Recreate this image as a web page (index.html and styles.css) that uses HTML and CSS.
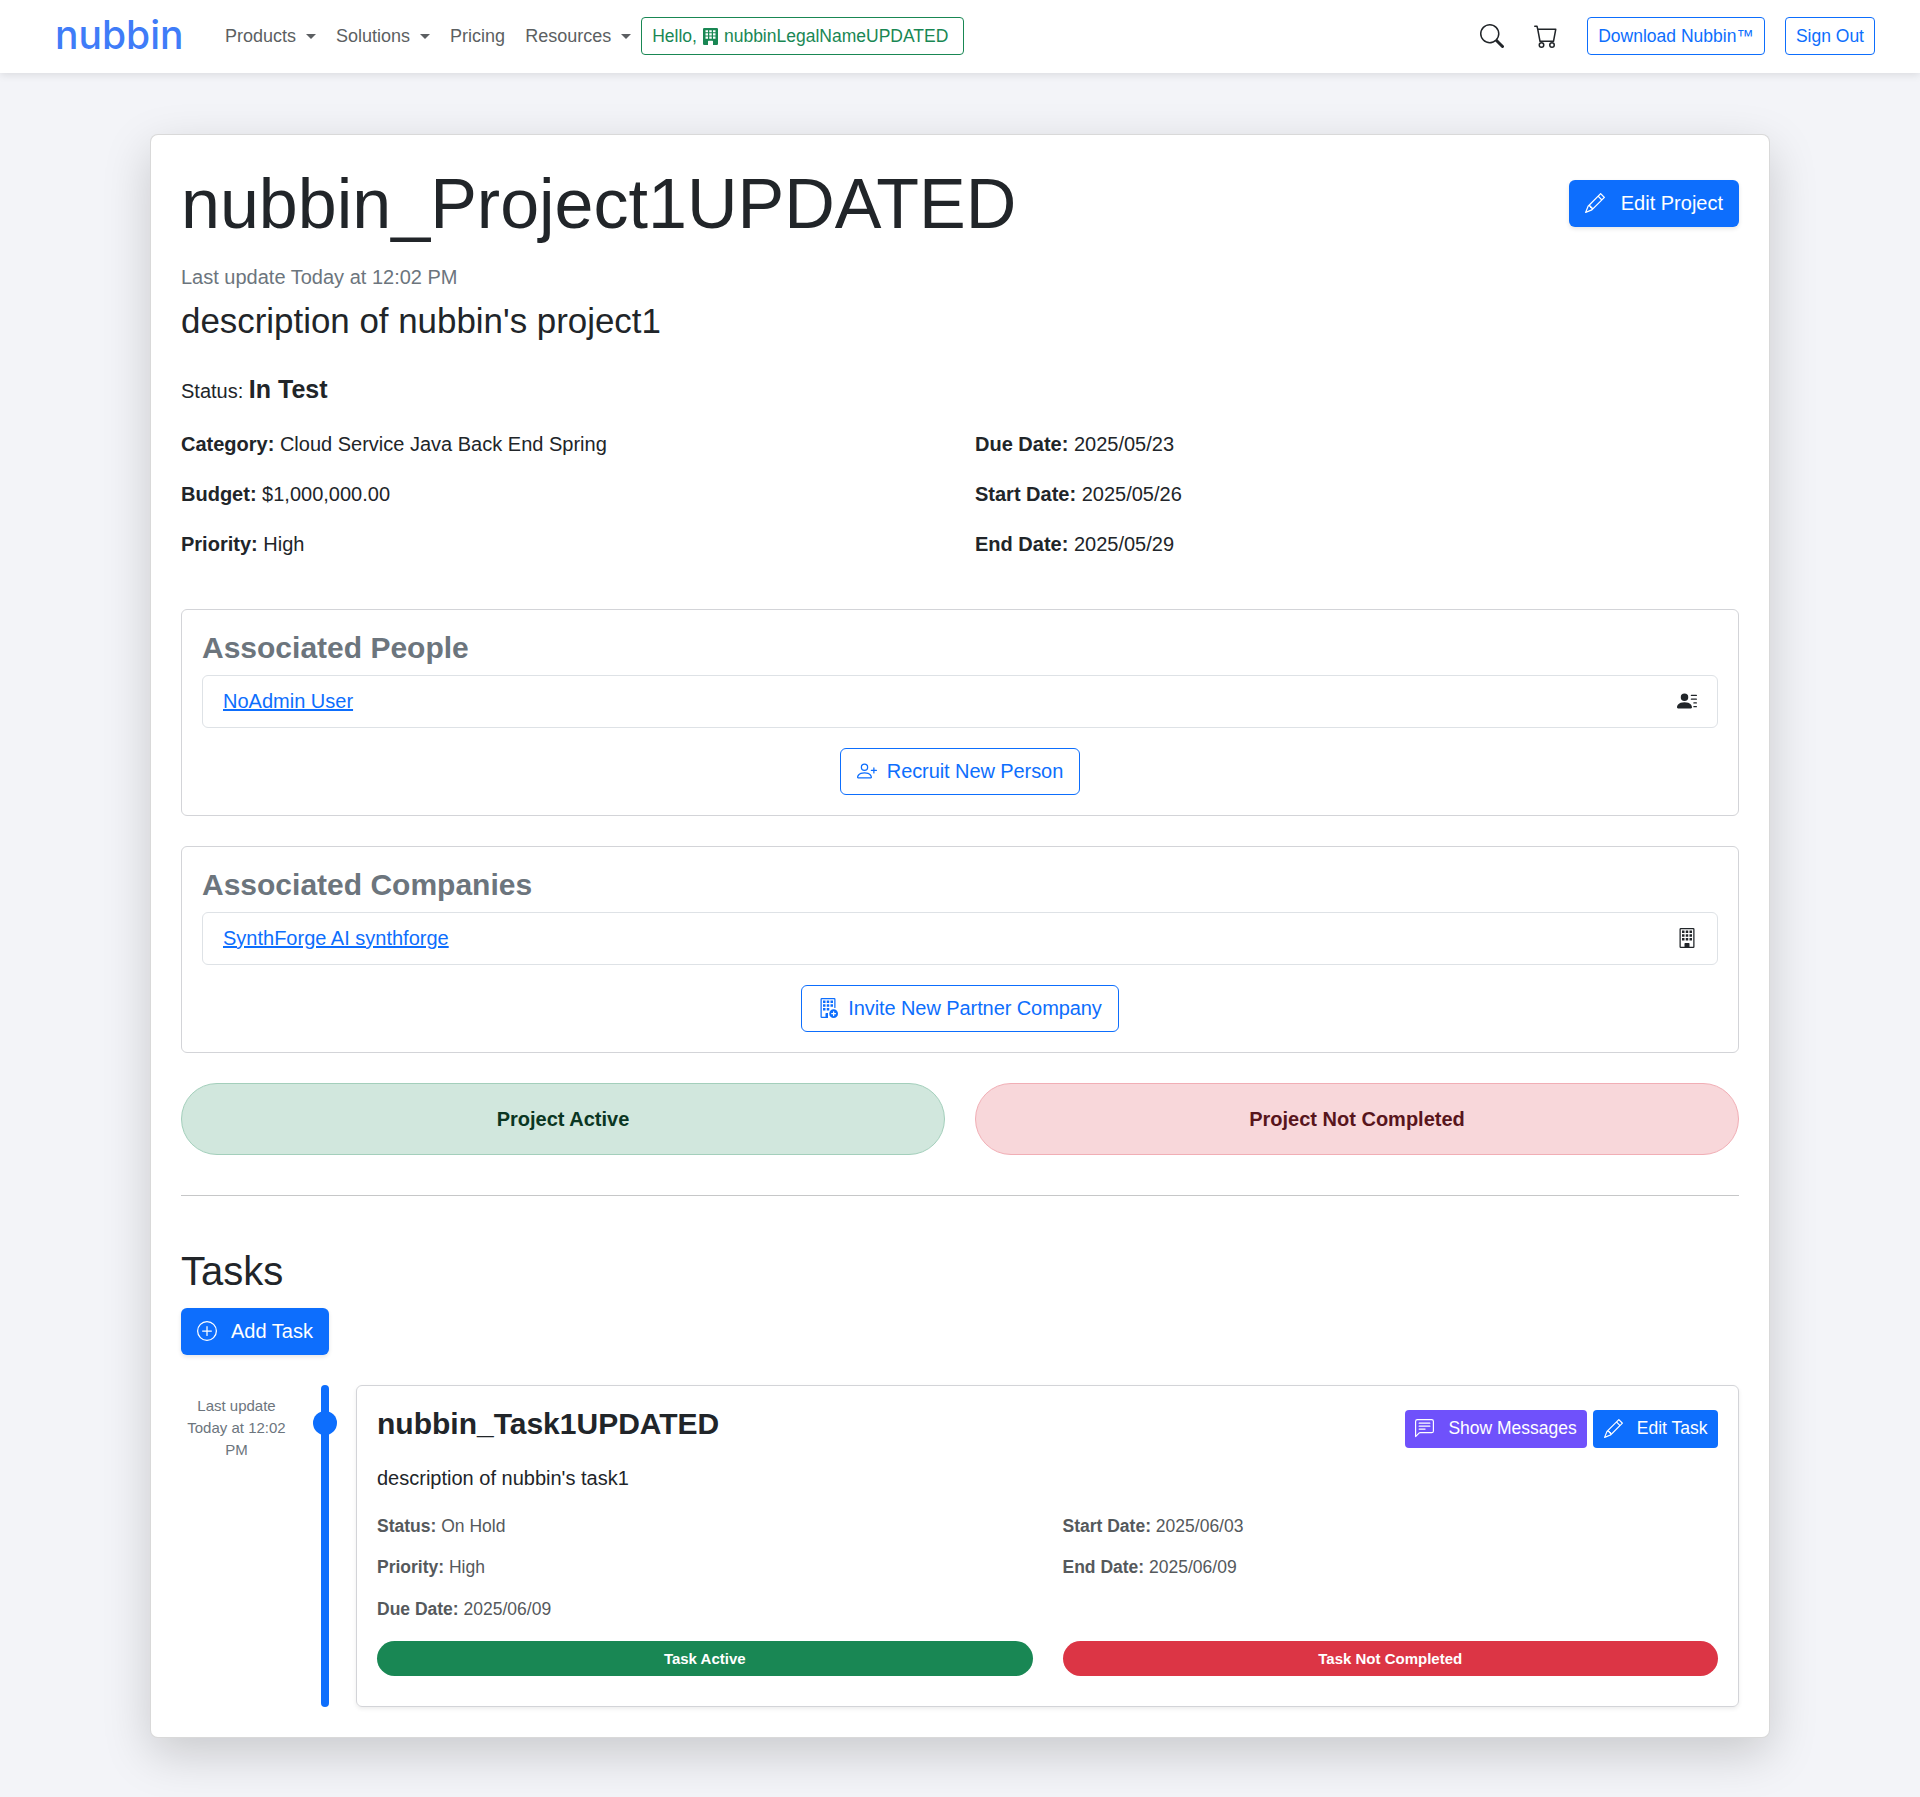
FILE: index.html

```html
<!DOCTYPE html>
<html lang="en">
<head>
  <meta charset="UTF-8" />
  <meta name="viewport" content="width=device-width, initial-scale=1.0" />
  <title>nubbin_Project1UPDATED</title>
  <link rel="stylesheet" href="styles.css">
</head>
<body>
  <nav class="navbar">
    <a class="logo" href="#">nubbin</a>
    <a class="nav-link caret" href="#">Products</a>
    <a class="nav-link caret" href="#">Solutions</a>
    <a class="nav-link" href="#">Pricing</a>
    <a class="nav-link caret" href="#">Resources</a>
    <a class="hello" href="#">Hello,
      <svg class="icon-hello" viewBox="2 0 12 16" preserveAspectRatio="none" fill="currentColor"><path fill-rule="evenodd" d="M3 0a1 1 0 0 0-1 1v14a1 1 0 0 0 1 1h3v-3.5a.5.5 0 0 1 .5-.5h3a.5.5 0 0 1 .5.5V16h3a1 1 0 0 0 1-1V1a1 1 0 0 0-1-1H3Zm1 2h2v2H4V2Zm3 0h2v2H7V2Zm3 0h2v2h-2V2ZM4 5h2v2H4V5Zm3 0h2v2H7V5Zm3 0h2v2h-2V5ZM4 8h2v2H4V8Zm3 0h2v2H7V8Zm3 0h2v2h-2V8Z"/></svg>
      nubbinLegalNameUPDATED</a>
    <div class="nav-right">
      <svg class="icon-search" viewBox="0 0 16 16" fill="currentColor"><path d="M11.742 10.344a6.5 6.5 0 1 0-1.397 1.398h-.001c.03.04.062.078.098.115l3.85 3.85a1 1 0 0 0 1.415-1.414l-3.85-3.85a1.007 1.007 0 0 0-.115-.1zM12 6.5a5.5 5.5 0 1 1-11 0 5.5 5.5 0 0 1 11 0z"/></svg>
      <svg class="icon-cart" viewBox="0 0 16 16" fill="currentColor"><path d="M0 1.5A.5.5 0 0 1 .5 1H2a.5.5 0 0 1 .485.379L2.89 3H14.5a.5.5 0 0 1 .491.592l-1.5 8A.5.5 0 0 1 13 12H4a.5.5 0 0 1-.491-.408L2.01 3.607 1.61 2H.5a.5.5 0 0 1-.5-.5zM3.102 4l1.313 7h8.17l1.313-7H3.102zM5 12a2 2 0 1 0 0 4 2 2 0 0 0 0-4zm7 0a2 2 0 1 0 0 4 2 2 0 0 0 0-4zm-7 1a1 1 0 1 1 0 2 1 1 0 0 1 0-2zm7 0a1 1 0 1 1 0 2 1 1 0 0 1 0-2z"/></svg>
      <a class="nav-btn download" href="#">Download Nubbin™</a>
      <a class="nav-btn" href="#">Sign Out</a>
    </div>
  </nav>

  <main class="project-card">
    <header class="project-head">
      <h1>nubbin_Project1UPDATED</h1>
      <a class="btn btn-primary" href="#">
        <svg class="icon-lg" viewBox="0 0 16 16" fill="currentColor"><path d="M12.146.146a.5.5 0 0 1 .708 0l3 3a.5.5 0 0 1 0 .708l-10 10a.5.5 0 0 1-.168.11l-5 2a.5.5 0 0 1-.65-.65l2-5a.5.5 0 0 1 .11-.168l10-10zM11.207 2.5 13.5 4.793 14.793 3.5 12.5 1.207 11.207 2.5zm1.586 3L10.5 3.207 4 9.707V10h.5a.5.5 0 0 1 .5.5v.5h.5a.5.5 0 0 1 .5.5v.5h.293l6.5-6.5zm-9.761 5.175-.106.106-1.528 3.821 3.821-1.528.106-.106A.5.5 0 0 1 5 12.5V12h-.5a.5.5 0 0 1-.5-.5V11h-.5a.5.5 0 0 1-.468-.325z"/></svg>
        Edit Project
      </a>
    </header>
    <p class="updated">Last update Today at 12:02 PM</p>
    <p class="description">description of nubbin's project1</p>
    <p class="status">Status: <strong>In Test</strong></p>

    <div class="details">
      <p><b>Category:</b> Cloud Service Java Back End Spring</p>
      <p><b>Due Date:</b> 2025/05/23</p>
      <p><b>Budget:</b> $1,000,000.00</p>
      <p><b>Start Date:</b> 2025/05/26</p>
      <p><b>Priority:</b> High</p>
      <p><b>End Date:</b> 2025/05/29</p>
    </div>

    <section class="assoc">
      <h2>Associated People</h2>
      <div class="assoc-item">
        <a href="#">NoAdmin User</a>
        <svg class="icon-item" viewBox="0 0 16 16" fill="currentColor"><path d="M6 8a3 3 0 1 0 0-6 3 3 0 0 0 0 6zm-5 6s-1 0-1-1 1-4 6-4 6 3 6 4-1 1-1 1H1zM11 3.5a.5.5 0 0 1 .5-.5h4a.5.5 0 0 1 0 1h-4a.5.5 0 0 1-.5-.5zm.5 2.5a.5.5 0 0 0 0 1h4a.5.5 0 0 0 0-1h-4zm2 3a.5.5 0 0 0 0 1h2a.5.5 0 0 0 0-1h-2zm0 3a.5.5 0 0 0 0 1h2a.5.5 0 0 0 0-1h-2z"/></svg>
      </div>
      <a class="btn btn-outline" href="#">
        <svg class="icon-lg" viewBox="0 0 16 16" fill="currentColor"><path d="M6 8a3 3 0 1 0 0-6 3 3 0 0 0 0 6zm2-3a2 2 0 1 1-4 0 2 2 0 0 1 4 0zm4 8c0 1-1 1-1 1H1s-1 0-1-1 1-4 6-4 6 3 6 4zm-1-.004c-.001-.246-.154-.986-.832-1.664C9.516 10.68 8.289 10 6 10c-2.29 0-3.516.68-4.168 1.332-.678.678-.83 1.418-.832 1.664h10z"/><path d="M13.5 5a.5.5 0 0 1 .5.5V7h1.5a.5.5 0 0 1 0 1H14v1.5a.5.5 0 0 1-1 0V8h-1.5a.5.5 0 0 1 0-1H13V5.5a.5.5 0 0 1 .5-.5z"/></svg>
        Recruit New Person
      </a>
    </section>

    <section class="assoc">
      <h2>Associated Companies</h2>
      <div class="assoc-item">
        <a href="#">SynthForge AI synthforge</a>
        <svg class="icon-item" viewBox="0 0 16 16" fill="currentColor"><path d="M2 1a1 1 0 0 1 1-1h10a1 1 0 0 1 1 1v14a1 1 0 0 1-1 1H3a1 1 0 0 1-1-1V1Zm11 0H3v14h3v-2.5a.5.5 0 0 1 .5-.5h3a.5.5 0 0 1 .5.5V15h3V1Z"/><path d="M4 2h2v2H4V2Zm3 0h2v2H7V2Zm3 0h2v2h-2V2ZM4 5h2v2H4V5Zm3 0h2v2H7V5Zm3 0h2v2h-2V5ZM4 8h2v2H4V8Zm3 0h2v2H7V8Zm3 0h2v2h-2V8Z"/></svg>
      </div>
      <a class="btn btn-outline" href="#">
        <svg class="icon-lg" viewBox="0 0 16 16" fill="currentColor"><path d="M12.5 16a3.5 3.5 0 1 0 0-7 3.5 3.5 0 0 0 0 7Zm.5-5v1h1a.5.5 0 0 1 0 1h-1v1a.5.5 0 0 1-1 0v-1h-1a.5.5 0 0 1 0-1h1v-1a.5.5 0 0 1 1 0Z"/><path d="M2 1a1 1 0 0 1 1-1h10a1 1 0 0 1 1 1v6.5a.5.5 0 0 1-1 0V1H3v14h3v-2.5a.5.5 0 0 1 .5-.5H8v4H3a1 1 0 0 1-1-1V1Z"/><path d="M4 2h2v2H4V2Zm3 0h2v2H7V2Zm3 0h2v2h-2V2ZM4 5h2v2H4V5Zm3 0h2v2H7V5Zm3 0h2v2h-2V5ZM4 8h2v2H4V8Zm3 0h2v2H7V8Z"/></svg>
        Invite New Partner Company
      </a>
    </section>

    <div class="state-row">
      <div class="state state-green">Project Active</div>
      <div class="state state-red">Project Not Completed</div>
    </div>

    <hr>

    <h2 class="tasks-title">Tasks</h2>
    <a class="btn btn-primary add-task" href="#">
      <svg class="icon-lg" viewBox="0 0 16 16" fill="currentColor"><path d="M8 15A7 7 0 1 1 8 1a7 7 0 0 1 0 14zm0 1A8 8 0 1 0 8 0a8 8 0 0 0 0 16z"/><path d="M8 4a.5.5 0 0 1 .5.5v3h3a.5.5 0 0 1 0 1h-3v3a.5.5 0 0 1-1 0v-3h-3a.5.5 0 0 1 0-1h3v-3A.5.5 0 0 1 8 4z"/></svg>
      Add Task
    </a>

    <div class="timeline">
      <div class="timeline-date">Last update<br>Today at 12:02 PM</div>
      <div class="timeline-line"><span class="timeline-dot"></span></div>
      <article class="task-card">
        <div class="task-head">
          <h3>nubbin_Task1UPDATED</h3>
          <div class="task-actions">
            <a class="btn-sm btn-purple" href="#">
              <svg class="icon-sm" viewBox="0 0 16 16" fill="currentColor"><path d="M14 1a1 1 0 0 1 1 1v8a1 1 0 0 1-1 1H4.414A2 2 0 0 0 3 11.586l-2 2V2a1 1 0 0 1 1-1h12zM2 0a2 2 0 0 0-2 2v12.793a.5.5 0 0 0 .854.353l2.853-2.853A1 1 0 0 1 4.414 12H14a2 2 0 0 0 2-2V2a2 2 0 0 0-2-2H2z"/><path d="M3 3.5a.5.5 0 0 1 .5-.5h9a.5.5 0 0 1 0 1h-9a.5.5 0 0 1-.5-.5zM3 6a.5.5 0 0 1 .5-.5h9a.5.5 0 0 1 0 1h-9A.5.5 0 0 1 3 6zm0 2.5a.5.5 0 0 1 .5-.5h5a.5.5 0 0 1 0 1h-5a.5.5 0 0 1-.5-.5z"/></svg>
              Show Messages
            </a>
            <a class="btn-sm btn-blue" href="#">
              <svg class="icon-sm" viewBox="0 0 16 16" fill="currentColor"><path d="M12.146.146a.5.5 0 0 1 .708 0l3 3a.5.5 0 0 1 0 .708l-10 10a.5.5 0 0 1-.168.11l-5 2a.5.5 0 0 1-.65-.65l2-5a.5.5 0 0 1 .11-.168l10-10zM11.207 2.5 13.5 4.793 14.793 3.5 12.5 1.207 11.207 2.5zm1.586 3L10.5 3.207 4 9.707V10h.5a.5.5 0 0 1 .5.5v.5h.5a.5.5 0 0 1 .5.5v.5h.293l6.5-6.5zm-9.761 5.175-.106.106-1.528 3.821 3.821-1.528.106-.106A.5.5 0 0 1 5 12.5V12h-.5a.5.5 0 0 1-.5-.5V11h-.5a.5.5 0 0 1-.468-.325z"/></svg>
              Edit Task
            </a>
          </div>
        </div>
        <p class="task-desc">description of nubbin's task1</p>
        <div class="task-details">
          <p><b>Status:</b> On Hold</p>
          <p><b>Start Date:</b> 2025/06/03</p>
          <p><b>Priority:</b> High</p>
          <p><b>End Date:</b> 2025/06/09</p>
          <p><b>Due Date:</b> 2025/06/09</p>
        </div>
        <div class="task-badges">
          <span class="badge badge-green">Task Active</span>
          <span class="badge badge-red">Task Not Completed</span>
        </div>
      </article>
    </div>
  </main>
</body>
</html>
```

FILE: styles.css

```css
:root {
  --blue: #0d6efd;
  --text: #212529;
  --muted: #6c757d;
  --line: #dee2e6;
}

* {
  box-sizing: border-box;
}

body {
  margin: 0;
  min-height: 1797px;
  background-color: #f3f4f8;
  color: var(--text);
  font-family: "Liberation Sans", Arial, sans-serif;
  font-size: 20px;
  line-height: 1.5;
}

a {
  text-decoration: none;
}

p {
  margin: 0;
}

/* navbar */
.navbar {
  display: flex;
  align-items: center;
  height: 73px;
  padding: 0 45px 1px 55px;
  background-color: #fff;
  box-shadow: 0 2px 8px rgba(0, 0, 0, 0.1);
  font-size: 18px;
}

.logo {
  width: 170px;
  margin-top: -3px;
  color: #3f7cf8;
  font-family: Inter, sans-serif;
  font-size: 39px;
  font-weight: 500;
  line-height: 1;
}

.nav-link {
  color: #5c5f62;
}

.nav-link + .nav-link {
  margin-left: 20px;
}

.caret::after {
  content: "";
  display: inline-block;
  margin-left: 10px;
  vertical-align: 3px;
  border-top: 5px solid;
  border-left: 5px solid transparent;
  border-right: 5px solid transparent;
}

.hello {
  display: flex;
  align-items: center;
  gap: 6px;
  height: 38px;
  margin-left: 10px;
  padding: 0 15px 0 10px;
  border: 1px solid #198754;
  border-radius: 4px;
  color: #198754;
  font-size: 17.5px;
}

.icon-hello {
  width: 15px;
  height: 17px;
}

.nav-right {
  display: flex;
  align-items: center;
  margin-left: auto;
}

.icon-search {
  width: 24px;
  height: 24px;
  margin-right: 30px;
  color: #212529;
}

.icon-cart {
  width: 24px;
  height: 24px;
  margin-right: 29px;
  color: #212529;
}

.nav-btn {
  display: block;
  height: 38px;
  padding: 0 10px;
  border: 1px solid var(--blue);
  border-radius: 4px;
  color: var(--blue);
  font-size: 17.5px;
  line-height: 36px;
}

.download {
  margin-right: 20px;
}

/* project card */
.project-card {
  width: 1620px;
  margin: 61px auto 60px;
  padding: 27px 30px 30px;
  background-color: #fff;
  border: 1px solid rgba(0, 0, 0, 0.15);
  border-radius: 8px;
  box-shadow: 0 16px 48px rgba(0, 0, 0, 0.175);
}

.project-head {
  display: flex;
  justify-content: space-between;
  align-items: center;
}

.project-head .btn {
  margin-bottom: 2px;
}

h1 {
  margin: 0;
  font-size: 70px;
  font-weight: 400;
  line-height: 1.2;
}

.btn {
  display: inline-flex;
  align-items: center;
  height: 47px;
  padding: 0 16px;
  border-radius: 6px;
  white-space: nowrap;
}

.btn-primary {
  gap: 16px;
  background-color: var(--blue);
  color: #fff;
  box-shadow: 0 2px 4px rgba(0, 0, 0, 0.1);
}

.btn-outline {
  gap: 10px;
  border: 1px solid var(--blue);
  color: var(--blue);
  letter-spacing: -0.08px;
}

.icon-lg {
  width: 20px;
  height: 20px;
}

.icon-sm {
  width: 19px;
  height: 19px;
}

.updated {
  margin-top: 16px;
  color: var(--muted);
}

.description {
  margin-top: 3px;
  font-size: 34.9px;
  line-height: 52px;
}

.status {
  margin-top: 24px;
}

.status strong {
  font-size: 25px;
}

.details {
  display: grid;
  grid-template-columns: 1fr 1fr;
  column-gap: 30px;
  row-gap: 20px;
  margin-top: 20px;
}

/* associated boxes */
.assoc {
  margin-top: 30px;
  padding: 20px;
  border: 1px solid #d3d4d8;
  border-radius: 6px;
  text-align: center;
}

.details + .assoc {
  margin-top: 50px;
}

.assoc h2 {
  margin: 0 0 9px;
  color: var(--muted);
  font-size: 30px;
  font-weight: 700;
  line-height: 1.2;
  text-align: left;
}

.assoc-item {
  display: flex;
  justify-content: space-between;
  align-items: center;
  height: 53px;
  margin-bottom: 20px;
  padding: 0 20px;
  border: 1px solid var(--line);
  border-radius: 6px;
}

.assoc-item a {
  color: var(--blue);
  text-decoration: underline;
}

.icon-item {
  width: 20px;
  height: 20px;
}

/* status pills */
.state-row {
  display: grid;
  grid-template-columns: 1fr 1fr;
  gap: 30px;
  margin-top: 30px;
}

.state {
  height: 72px;
  border-radius: 36px;
  font-weight: 700;
  line-height: 70px;
  text-align: center;
}

.state-green {
  background-color: #d1e7dd;
  border: 1px solid #a3cfbb;
  color: #0a3622;
}

.state-red {
  background-color: #f8d7da;
  border: 1px solid #f1aeb5;
  color: #58151c;
}

hr {
  margin: 40px 0 51px;
  border: 0;
  border-top: 1px solid #c6c7c8;
}

.tasks-title {
  margin: 0 0 13px;
  font-size: 40px;
  font-weight: 400;
  line-height: 1.2;
}

.add-task {
  display: flex;
  width: 148px;
  gap: 14px;
}

/* timeline */
.timeline {
  display: flex;
  margin-top: 30px;
}

.timeline-date {
  width: 111px;
  padding-top: 10px;
  color: var(--muted);
  font-size: 15px;
  line-height: 22px;
  text-align: center;
}

.timeline-line {
  position: relative;
  width: 8px;
  margin: 0 27px 0 29px;
  background-color: var(--blue);
  border-radius: 4px;
}

.timeline-dot {
  position: absolute;
  top: 26px;
  left: -8px;
  width: 24px;
  height: 24px;
  background-color: var(--blue);
  border-radius: 50%;
}

.task-card {
  flex: 1;
  padding: 20px 20px 30px;
  border: 1px solid #d3d4d8;
  border-radius: 6px;
  box-shadow: 0 2px 4px rgba(0, 0, 0, 0.075);
}

.task-head {
  display: flex;
  justify-content: space-between;
}

h3 {
  margin: 0;
  font-size: 30px;
  font-weight: 700;
  line-height: 1.2;
}

.task-actions {
  display: flex;
  gap: 6px;
  margin-top: 4px;
}

.btn-sm {
  display: flex;
  align-items: center;
  gap: 14px;
  height: 38px;
  padding: 0 10.5px;
  border-radius: 4px;
  color: #fff;
  font-size: 17.5px;
}

.btn-purple {
  background-color: #6f51fb;
}

.btn-blue {
  background-color: var(--blue);
}

.task-desc {
  margin-top: 15px;
}

.task-details {
  display: grid;
  grid-template-columns: 1fr 1fr;
  column-gap: 30px;
  row-gap: 15.5px;
  margin-top: 20px;
  color: #55595c;
  font-size: 17.5px;
}

.task-badges {
  display: grid;
  grid-template-columns: 1fr 1fr;
  gap: 30px;
  margin-top: 19px;
}

.badge {
  height: 35px;
  border-radius: 18px;
  color: #fff;
  font-size: 15px;
  font-weight: 700;
  line-height: 35px;
  text-align: center;
}

.badge-green {
  background-color: #198754;
}

.badge-red {
  background-color: #dc3545;
}
```
